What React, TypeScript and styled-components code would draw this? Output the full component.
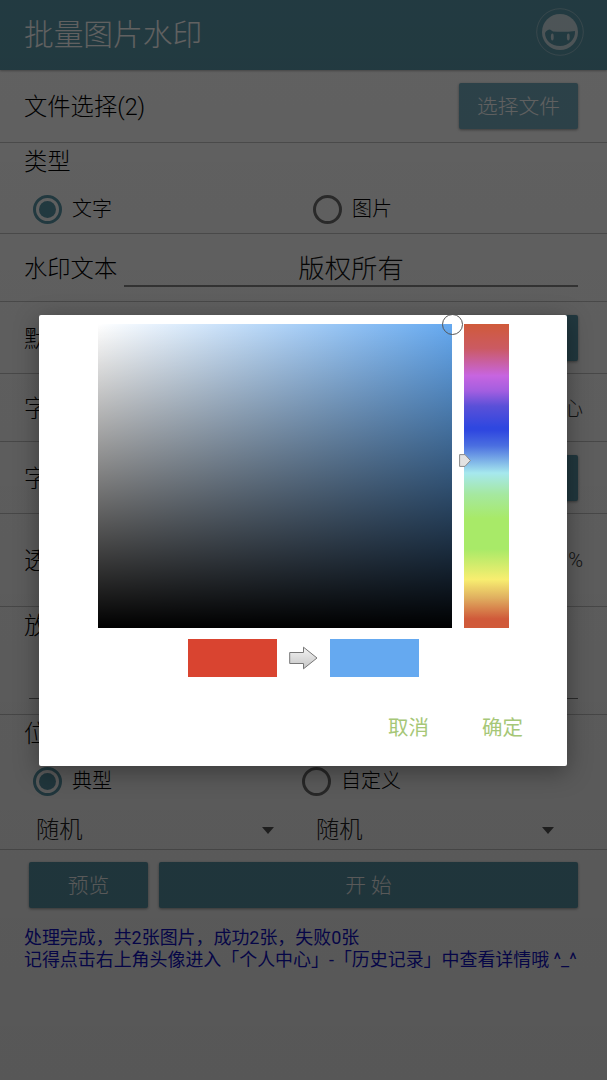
import React from "react";
import styled, { createGlobalStyle } from "styled-components";

const Global = createGlobalStyle`
  html, body { margin: 0; padding: 0; background: #fff; }
  body { font-family: Roboto, "Noto Sans CJK SC", "Noto Sans", sans-serif; font-weight: 300; color: #000; }
  * { box-sizing: border-box; }
`;

const Page = styled.div`
  position: relative;
  width: 607px;
  height: 1080px;
  overflow: hidden;
  background: #fff;
`;

const Header = styled.header`
  height: 70px;
  background: #5a98aa;
  display: flex;
  align-items: center;
  justify-content: space-between;
  padding: 0 23px 6px 24px;
  color: #fff;
  font-size: 29.7px;
  box-shadow: 0 1px 2px rgba(0, 0, 0, 0.3);
`;

const Row = styled.section<{ $h: number }>`
  height: ${(p) => p.$h}px;
  border-bottom: 1px solid #c4c4c4;
  display: flex;
  align-items: center;
  justify-content: space-between;
  padding: 0 29px 0 24px;
  flex-shrink: 0;
`;

const StackRow = styled.section<{ $h: number }>`
  height: ${(p) => p.$h}px;
  border-bottom: 1px solid #c4c4c4;
  padding: 3px 24px 0;
`;

const Label = styled.span`
  font-size: 23.3px;
  line-height: 28px;
  padding-top: 2px;
  white-space: nowrap;
  display: block;
`;

const Button = styled.button<{ $w?: number; $light?: boolean; $grow?: boolean }>`
  height: 46px;
  width: ${(p) => (p.$w ? `${p.$w}px` : "auto")};
  flex: ${(p) => (p.$grow ? 1 : "none")};
  border: 0;
  border-radius: 2px;
  background: ${(p) => (p.$light ? "#74adc0" : "#5a98aa")};
  color: #fff;
  font: inherit;
  font-size: 20.7px;
  padding: 0 0 2px;
  box-shadow: 0 1px 3px rgba(0, 0, 0, 0.4);
`;

const Radios = styled.div`
  display: grid;
  grid-template-columns: 280px 1fr;
  padding: 0 0 0 9px;
  margin-top: 19px;
`;

const RadiosLower = styled(Radios)`
  grid-template-columns: 269px 1fr;
  margin-top: 19px;
`;

const Radio = styled.label`
  display: flex;
  align-items: center;
  gap: 10px;
  font-size: 20px;
  line-height: 29px;
`;

const RadioMark = styled.span<{ $on?: boolean }>`
  width: 29px;
  height: 29px;
  border-radius: 50%;
  border: 3px solid ${(p) => (p.$on ? "#5a98aa" : "#6f6f6f")};
  display: flex;
  align-items: center;
  justify-content: center;
  &::after {
    content: "";
    width: 17px;
    height: 17px;
    border-radius: 50%;
    background: ${(p) => (p.$on ? "#5a98aa" : "transparent")};
  }
`;

const TextField = styled.div`
  flex: 1;
  margin: 0 0 0 7px;
  height: 42px;
  border-bottom: 2px solid #888;
  text-align: center;
  font-size: 26.4px;
  line-height: 48px;
  color: #111;
  transform: translateY(-2px);
`;

const RightText = styled.span`
  font-size: 20px;
  margin-right: -5px;
  color: #333;
`;

const ScaleRow = styled.section`
  height: 108px;
  border-bottom: 1px solid #c4c4c4;
  padding: 3px 29px 0 24px;
`;

const ScaleLine = styled.div`
  margin: 58px 0 0 5px;
  border-bottom: 1px solid #777;
`;

const Selects = styled.div`
  display: grid;
  grid-template-columns: 262px 262px;
  column-gap: 18px;
  padding: 0 0 0 12px;
  margin-top: 19px;
`;

const Select = styled.div`
  display: flex;
  align-items: center;
  justify-content: space-between;
  padding-right: 24px;
  font-size: 23.3px;
  line-height: 30px;
  color: #222;
  &::after {
    content: "";
    border: 6.5px solid transparent;
    border-top: 7px solid #555;
    border-bottom: 0;
  }
`;

const Actions = styled.div`
  display: flex;
  gap: 11px;
  padding: 12px 29px 0;
`;

const Result = styled.p`
  margin: 19px 0 0 24px;
  width: 570px;
  font-size: 17.95px;
  line-height: 22px;
  color: #1010cc;
  white-space: nowrap;
  font-weight: 400;
`;

const Scrim = styled.div`
  position: absolute;
  inset: 0;
  background: linear-gradient(rgba(0, 0, 0, 0.62), rgba(0, 0, 0, 0.66));
  display: flex;
  align-items: center;
  justify-content: center;
`;

const Dialog = styled.div`
  width: 528px;
  height: 451px;
  margin-right: 1px;
  background: #fff;
  border-radius: 2px;
  box-shadow: 0 6px 24px rgba(0, 0, 0, 0.35);
  padding: 9px 0 0 59px;
  display: flex;
  flex-direction: column;
`;

const Pickers = styled.div`
  display: flex;
  gap: 12px;
`;

const SvSquare = styled.div`
  position: relative;
  width: 354px;
  height: 304px;
  background: linear-gradient(to bottom, transparent, #000),
    linear-gradient(to right, #fff, #65a9f0);
`;

const SvCursor = styled.span`
  position: absolute;
  right: -11px;
  top: -10px;
  width: 21px;
  height: 21px;
  border-radius: 50%;
  border: 1.5px solid #555;
`;

const HueBar = styled.div`
  position: relative;
  width: 45px;
  height: 304px;
  background: linear-gradient(
    to bottom,
    #d05a3a 0%,
    #cb5a62 8%,
    #c765e0 17%,
    #a35ee0 22%,
    #5a50d8 27%,
    #2f47e0 34%,
    #2f47e0 35%,
    #4a6ee0 40%,
    #a6e8ee 49%,
    #a5e8a0 56%,
    #a8ea68 64%,
    #a8ea68 74%,
    #f8ee70 84%,
    #e0b060 90%,
    #d05a3a 97%,
    #d05a3a 100%
  );
`;

const HueMark = styled.svg`
  position: absolute;
  left: -5px;
  top: 130px;
`;

const Compare = styled.div`
  display: flex;
  align-items: center;
  margin: 11px 0 0 90px;
`;

const Swatch = styled.div<{ $color: string }>`
  width: 89px;
  height: 38px;
  background: ${(p) => p.$color};
`;

const ArrowIcon = styled.svg`
  margin: 0 12px;
  display: block;
`;

const DialogActions = styled.div`
  display: flex;
  gap: 53px;
  margin: 37px 0 0 290px;
  font-size: 20.5px;
  font-weight: 400;
  line-height: 28px;
  color: #a6c777;
`;

function Avatar() {
  return (
    <svg width="48" height="48" viewBox="0 0 48 48">
      <circle cx="24" cy="24" r="23.3" fill="none" stroke="#fff" strokeOpacity="0.35" strokeWidth="1" />
      <circle cx="24" cy="24" r="18" fill="#fff" fillOpacity="0.68" />
      <path d="M9 25 C10 23 12 21.5 14 21.5 L17 23.5 C24 24 31 24 39 23 C39.6 31 33 38 24 38 C15 38 9 32 9 25Z" fill="#5a98aa" />
      <ellipse cx="16.3" cy="29" rx="1.4" ry="3.4" fill="#fff" fillOpacity="0.68" />
      <ellipse cx="32.3" cy="29" rx="1.4" ry="3.4" fill="#fff" fillOpacity="0.68" />
    </svg>
  );
}

export default function App() {
  return (
    <Page>
      <Global />
      <Header>
        <span>批量图片水印</span>
        <Avatar />
      </Header>
      <Row $h={73}>
        <Label>文件选择(2)</Label>
        <Button $w={119} $light>选择文件</Button>
      </Row>
      <StackRow $h={91}>
        <Label>类型</Label>
        <Radios>
          <Radio><RadioMark $on />文字</Radio>
          <Radio><RadioMark />图片</Radio>
        </Radios>
      </StackRow>
      <Row $h={68}>
        <Label>水印文本</Label>
        <TextField>版权所有</TextField>
      </Row>
      <Row $h={72}>
        <Label>默认</Label>
        <Button $w={119}>选择</Button>
      </Row>
      <Row $h={68}>
        <Label>字体</Label>
        <RightText>中心</RightText>
      </Row>
      <Row $h={72}>
        <Label>字号</Label>
        <Button $w={119}>选择</Button>
      </Row>
      <Row $h={93}>
        <Label>透明度</Label>
        <RightText>%</RightText>
      </Row>
      <ScaleRow>
        <Label>放大</Label>
        <ScaleLine />
      </ScaleRow>
      <StackRow $h={135}>
        <Label>位置</Label>
        <RadiosLower>
          <Radio><RadioMark $on />典型</Radio>
          <Radio><RadioMark />自定义</Radio>
        </RadiosLower>
        <Selects>
          <Select>随机</Select>
          <Select>随机</Select>
        </Selects>
      </StackRow>
      <Actions>
        <Button $w={119}>预览</Button>
        <Button $grow>开 始</Button>
      </Actions>
      <Result>
        处理完成，共2张图片，成功2张，失败0张
        <br />
        记得点击右上角头像进入「个人中心」-「历史记录」中查看详情哦 ^_^
      </Result>
      <Scrim>
        <Dialog>
          <Pickers>
            <SvSquare><SvCursor /></SvSquare>
            <HueBar>
              <HueMark width="12" height="13" viewBox="0 0 12 13">
                <path d="M.6.6H6L11.4 6.5 6 12.4H.6Z" fill="#e2e2e2" stroke="#8a8a8a" />
              </HueMark>
            </HueBar>
          </Pickers>
          <Compare>
            <Swatch $color="#d94430" />
            <ArrowIcon width="29" height="24" viewBox="0 0 29 24">
              <defs>
                <linearGradient id="arrowFill" x1="0" y1="0" x2="0" y2="1">
                  <stop offset="0" stopColor="#f4f4f4" />
                  <stop offset="1" stopColor="#c4c4c4" />
                </linearGradient>
              </defs>
              <path d="M.7 6.5H14.5V1.2L28 12 14.5 22.8V17.5H.7Z" fill="url(#arrowFill)" stroke="#777" />
            </ArrowIcon>
            <Swatch $color="#65a9f0" />
          </Compare>
          <DialogActions>
            <span>取消</span>
            <span>确定</span>
          </DialogActions>
        </Dialog>
      </Scrim>
    </Page>
  );
}
